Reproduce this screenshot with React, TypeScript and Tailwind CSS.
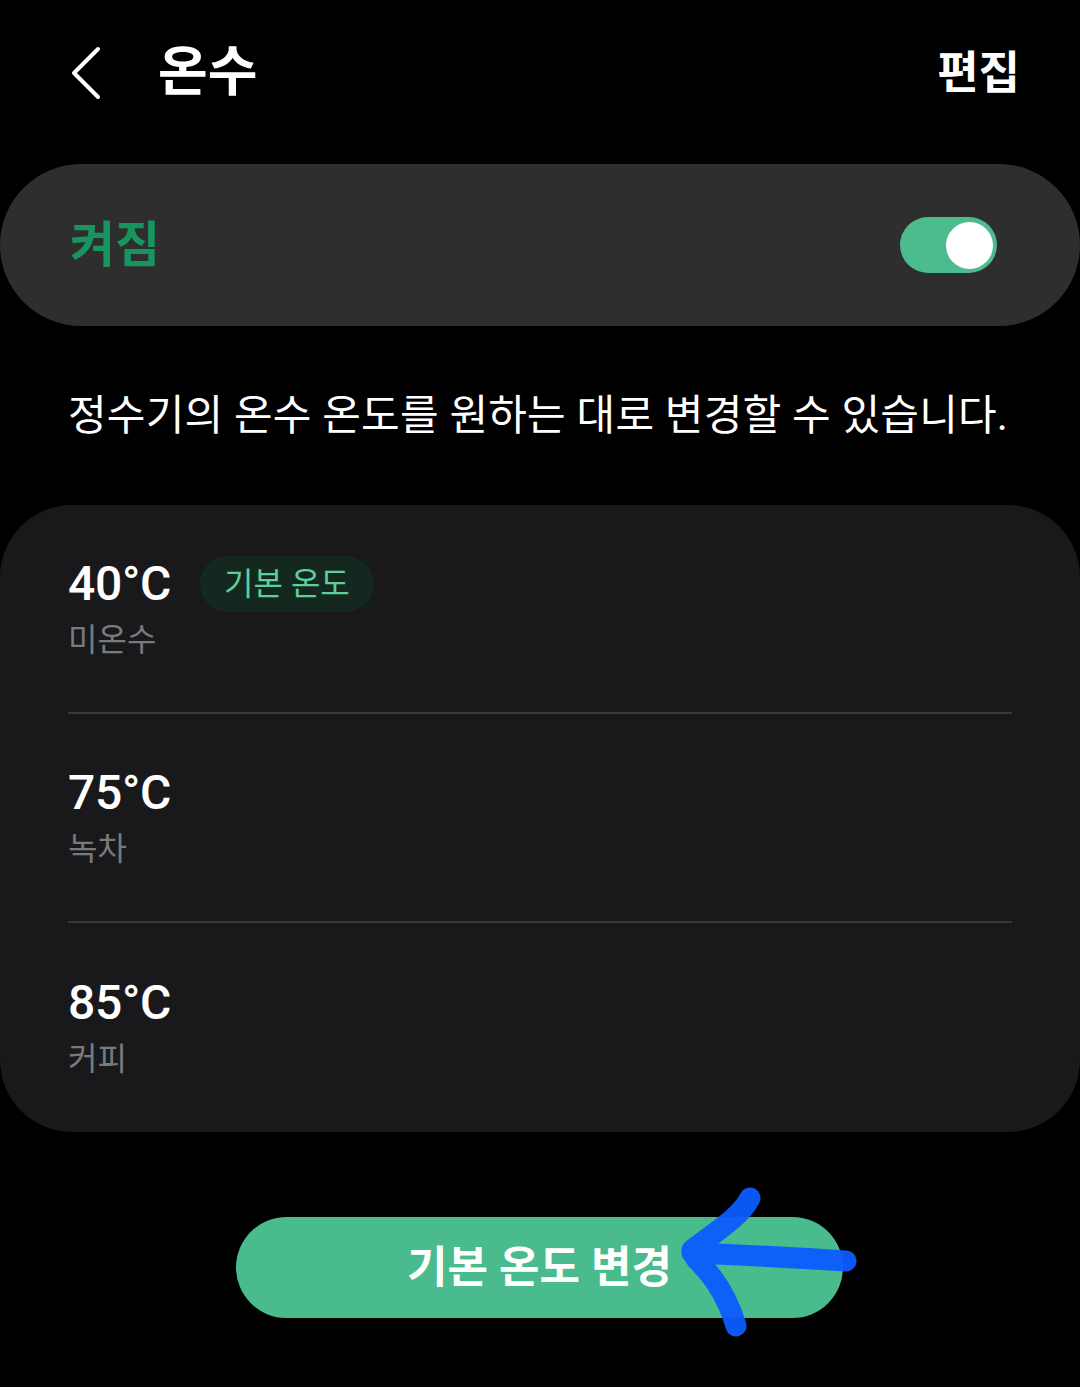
import React from "react";

const FONT = { fontFamily: 'Roboto, "Noto Sans CJK KR", "Noto Sans", sans-serif' };

const TEMPS = [
  { value: "40°C", label: "미온수", isDefault: true },
  { value: "75°C", label: "녹차", isDefault: false },
  { value: "85°C", label: "커피", isDefault: false },
];

const BackChevron = () => (
  <svg width="32" height="54" viewBox="0 0 32 54" className="shrink-0">
    <path
      d="M28 3 L4 27 L28 51"
      fill="none"
      stroke="#ffffff"
      strokeWidth="4"
      strokeLinecap="round"
      strokeLinejoin="round"
    />
  </svg>
);

const Toggle = () => (
  <div className="w-[97px] h-[56px] rounded-full bg-[#4cbb8d] flex items-center justify-end pr-[4px]">
    <div className="w-[47px] h-[47px] rounded-full bg-white" />
  </div>
);

const TempRow = ({ temp, last }: { temp: (typeof TEMPS)[number]; last: boolean }) => (
  <div className={`h-[209px] flex flex-col justify-center ${last ? "" : "border-b-2 border-[#3a3a3c]"}`}>
    <div className="flex items-center h-[62px]">
      <span className="text-[48px] font-medium text-white leading-none tracking-[-0.3px]">{temp.value}</span>
      {temp.isDefault && (
        <span className="ml-[29px] h-[56px] px-[24px] rounded-full bg-[#15281f] text-[#5ccf9b] text-[32px] flex items-center">
          기본 온도
        </span>
      )}
    </div>
    <div className="h-[50px] flex items-center text-[32px] text-[#7a7a7a] leading-none">{temp.label}</div>
  </div>
);

export default function App() {
  return (
    <div className="relative w-[1080px] h-[1387px] bg-black overflow-hidden" style={FONT}>
      {/* Header */}
      <header className="h-[146px] flex items-center pl-[70px] pr-[60px]">
        <BackChevron />
        <h1 className="ml-[56px] text-[54px] font-bold text-white leading-none">온수</h1>
        <button className="ml-auto text-[45px] font-bold text-white leading-none">편집</button>
      </header>

      {/* On/off card */}
      <section className="mt-[18px] h-[162px] rounded-full bg-[#2e2e2e] flex items-center pl-[70px] pr-[83px]">
        <span className="text-[49px] font-bold text-[#17955e] leading-none">켜짐</span>
        <div className="ml-auto">
          <Toggle />
        </div>
      </section>

      {/* Description */}
      <div className="h-[179px] flex items-center pl-[68px]">
        <p className="text-[42px] text-white leading-none tracking-[0.2px]">
          정수기의 온수 온도를 원하는 대로 변경할 수 있습니다.
        </p>
      </div>

      {/* Temperature list */}
      <section className="h-[627px] rounded-[72px] bg-[#19191b] px-[68px]">
        {TEMPS.map((t, i) => (
          <TempRow key={t.value} temp={t} last={i === TEMPS.length - 1} />
        ))}
      </section>

      {/* Action */}
      <div className="mt-[85px] flex pl-[236px]">
        <button className="w-[607px] h-[101px] rounded-full bg-[#49bb8c] text-white text-[44px] font-bold leading-none flex items-center justify-center">
          기본 온도 변경
        </button>
      </div>

      {/* hand-drawn arrow annotation */}
      <svg
        className="absolute left-0 top-0 pointer-events-none"
        width="1080"
        height="1387"
        viewBox="0 0 1080 1387"
      >
        <g fill="none" stroke="#0b5cff" strokeWidth="21" strokeLinecap="round" strokeLinejoin="round" opacity="0.95">
          <path d="M846 1261 Q770 1256 692 1253" />
          <path d="M750 1198 C740 1218 712 1234 692 1250" />
          <path d="M696 1259 C716 1278 729 1302 736 1326" />
        </g>
      </svg>
    </div>
  );
}
